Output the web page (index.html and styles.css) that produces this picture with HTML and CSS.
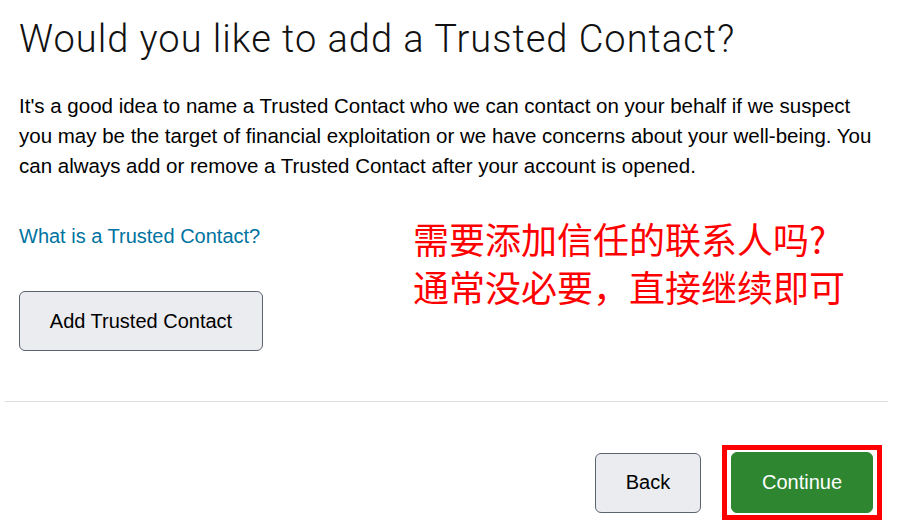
FILE: index.html
```html
<!DOCTYPE html>
<html lang="en">
<head>
<meta charset="utf-8">
<title>Trusted Contact</title>
<link rel="stylesheet" href="styles.css">
</head>
<body>
<div class="page">
  <main class="content">
    <h1 class="title">Would you like to add a Trusted Contact?</h1>
    <p class="intro">It's a good idea to name a Trusted Contact who we can contact on your behalf if we suspect you may be the target of financial exploitation or we have concerns about your well-being. You can always add or remove a Trusted Contact after your account is opened.</p>
    <div class="middle">
      <div class="left-col">
        <a class="link" href="#">What is a Trusted Contact?</a>
        <button class="btn btn-secondary btn-add" type="button">Add Trusted Contact</button>
      </div>
      <div class="note" lang="zh-CN">需要添加信任的联系人吗?<br>通常没必要，直接继续即可</div>
    </div>
  </main>
  <footer class="footer">
    <button class="btn btn-secondary btn-back" type="button">Back</button>
    <span class="highlight"><button class="btn btn-primary" type="button">Continue</button></span>
  </footer>
</div>
</body>
</html>
```
FILE: styles.css
```css
html, body {
  margin: 0;
  padding: 0;
  background: #ffffff;
}
body {
  font-family: "Liberation Sans", Arial, sans-serif;
  color: #000000;
}
.page {
  width: 883px;
  margin-left: 5px;
}
.content {
  padding: 0 14px;
}
.title {
  font-family: Roboto, "Liberation Sans", sans-serif;
  font-weight: 300;
  font-size: 38px;
  letter-spacing: 1px;
  line-height: 46px;
  margin: 16px 0 0 0;
  color: #111111;
}
.intro {
  font-size: 20.5px;
  line-height: 30px;
  margin: 29px 0 0 0;
  max-width: 860px;
}
.middle {
  display: flex;
  margin-top: 40px;
}
.left-col {
  width: 394px;
  display: flex;
  flex-direction: column;
  align-items: flex-start;
}
.link {
  font-size: 20px;
  line-height: 30px;
  color: #0073a0;
  text-decoration: none;
}
.btn {
  font-family: "Liberation Sans", Arial, sans-serif;
  font-size: 20px;
  border-radius: 6px;
  cursor: pointer;
}
.btn-secondary {
  background: #ebecf0;
  border: 1px solid #5b6470;
  color: #000000;
}
.btn-add {
  margin-top: 40px;
  width: 244px;
  height: 60px;
}
.note {
  font-family: "Noto Sans CJK SC", sans-serif;
  font-size: 36px;
  line-height: 48px;
  color: #ff0000;
  margin-top: -7px;
}
.footer {
  border-top: 1px solid #dddddd;
  margin-top: 50px;
  display: flex;
  justify-content: flex-end;
  align-items: center;
  padding: 43px 6px 0 0;
}
.btn-back {
  width: 106px;
  height: 60px;
}
.highlight {
  display: inline-flex;
  border: 5px solid #ff0000;
  padding: 2px 4px 2px 4px;
  margin-left: 21px;
}
.btn-primary {
  background: #2e8631;
  border: 1px solid #2e8631;
  color: #ffffff;
  width: 142px;
  height: 61px;
}
```
